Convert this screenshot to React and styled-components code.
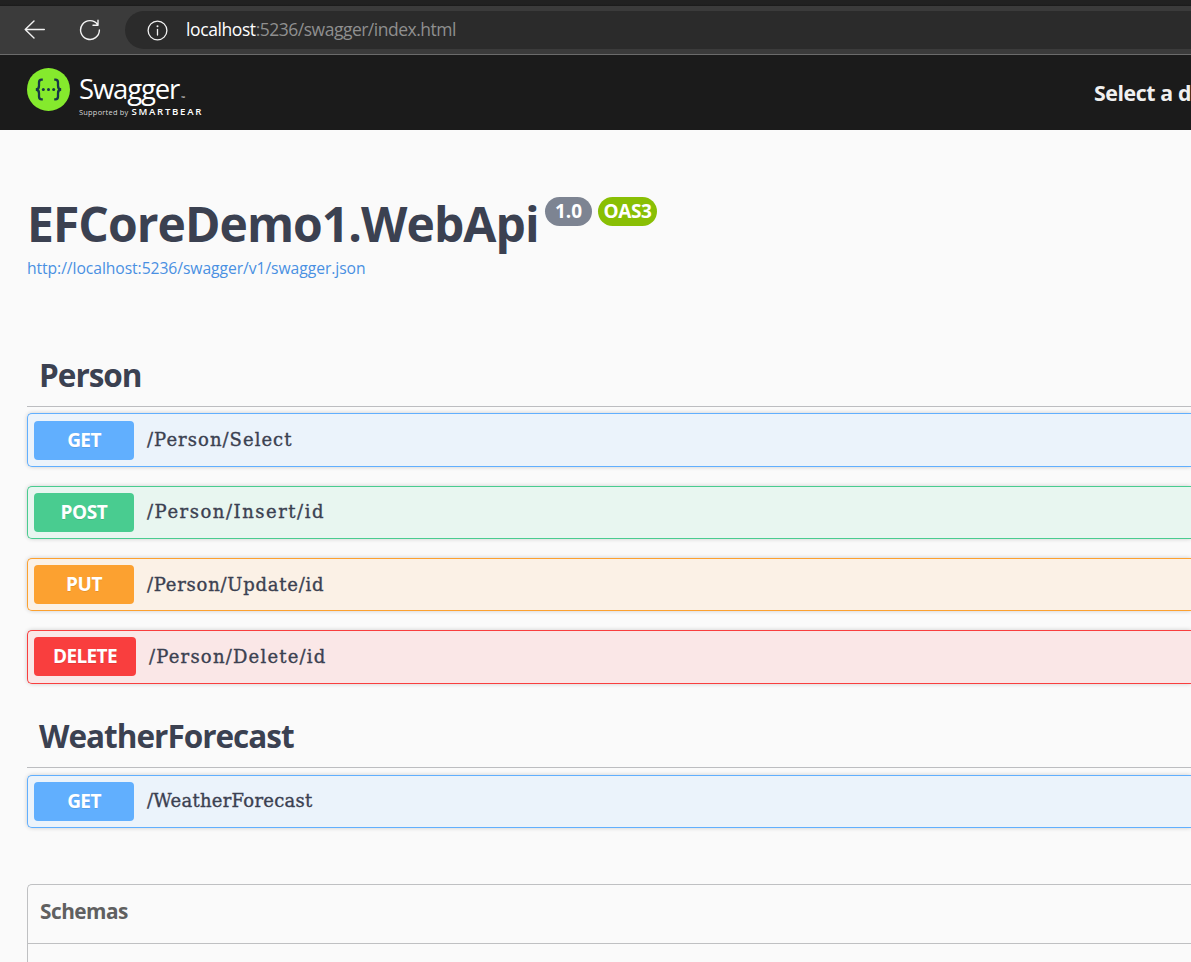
import React from "react";
import styled, { createGlobalStyle } from "styled-components";

const GlobalStyle = createGlobalStyle`
  * { box-sizing: border-box; }
  body {
    margin: 0;
    background: #fafafa;
    color: #3b4151;
    font-family: "Open Sans", "Noto Sans", sans-serif;
    overflow: hidden;
  }
`;

const Page = styled.div`
  height: 962px;
  overflow: hidden;
`;

const TabStrip = styled.div`
  height: 6px;
  background: linear-gradient(#212121 0 4px, #1a1a1a 6px);
`;

const BrowserBar = styled.div`
  height: 49px;
  display: flex;
  align-items: center;
  background: #3b3b3b;
  border-bottom: 1px solid #6b6b6b;
`;

const NavButton = styled.span`
  display: flex;
  width: 22px;
  height: 22px;
  margin-left: ${(p) => p.$left}px;
`;

const AddressBar = styled.div`
  flex: 1;
  height: 38px;
  margin-left: 24px;
  padding-left: 22px;
  display: flex;
  align-items: center;
  background: #2b2b2b;
  border-radius: 19px 0 0 19px;
`;

const Url = styled.span`
  margin: 0 0 2px 18px;
  font-size: 17.5px;
  line-height: 24px;
  letter-spacing: -0.5px;
  color: #8f8f8f;
  white-space: nowrap;
`;

const Host = styled.span`
  color: #fff;
  letter-spacing: -0.4px;
`;

const TopBar = styled.header`
  height: 75px;
  padding-left: 27px;
  display: flex;
  align-items: flex-start;
  justify-content: space-between;
  background: #1b1b1b;
`;

const Brand = styled.div`
  display: flex;
  padding-top: 13px;
`;

const Wordmark = styled.div`
  margin-left: 9px;
  padding-top: 3px;
  color: #fff;
`;

const BrandName = styled.div`
  display: flex;
  align-items: flex-end;
  font-size: 27.5px;
  line-height: 35px;
  font-weight: 400;
  letter-spacing: -1.15px;
`;

const Trademark = styled.span`
  margin-left: 2px;
  font-size: 5px;
  line-height: 15px;
  letter-spacing: 0;
`;

const Supported = styled.div`
  display: flex;
  font-size: 7.4px;
  line-height: 13px;
  white-space: nowrap;
  letter-spacing: 0.25px;
  color: #d8d8d8;
`;

const Company = styled.span`
  margin-left: 3px;
  font-size: 9.6px;
  line-height: 12px;
  font-weight: 600;
  letter-spacing: 1.7px;
  color: #fff;
`;

const SelectLabel = styled.span`
  padding-top: 22px;
  white-space: nowrap;
  font-size: 21.3px;
  line-height: 32px;
  font-weight: 700;
  letter-spacing: -0.4px;
  color: #f0f0f0;
`;

const Main = styled.main`
  padding-left: 27px;
`;

const Info = styled.section`
  height: 213px;
  padding-top: 62px;
`;

const TitleRow = styled.div`
  display: flex;
  height: 64px;
`;

const Title = styled.h1`
  margin: 0;
  width: 518px;
  font-size: 48px;
  line-height: 64px;
  font-weight: 700;
  letter-spacing: -0.96px;
  white-space: nowrap;
`;

const Badge = styled.span`
  width: ${(p) => p.$width}px;
  height: 29px;
  margin: 5px 6px 0 0;
  border-radius: 15px;
  background: ${(p) => p.$color};
  color: #fff;
  font-size: 19px;
  line-height: 29px;
  font-weight: 700;
  letter-spacing: ${(p) => p.$spacing};
  text-align: center;
`;

const SpecLink = styled.a`
  display: block;
  font-size: 15.7px;
  line-height: 24px;
  letter-spacing: -0.07px;
  color: #4990e2;
`;

const TagTitle = styled.h2`
  margin: 0;
  height: 64px;
  padding-left: 12px;
  border-bottom: 1px solid #bcbdc0;
  font-size: 31.5px;
  line-height: 63px;
  font-weight: 700;
  letter-spacing: -1px;
`;

const Operations = styled.div`
  display: flex;
  flex-direction: column;
  gap: 18.8px;
  padding-top: ${(p) => p.$top}px;
  height: ${(p) => p.$height}px;
`;

const Operation = styled.div`
  height: 53.45px;
  flex: none;
  display: flex;
  align-items: center;
  padding-left: 6px;
  border: 1px solid ${(p) => p.$color};
  border-right: 0;
  border-radius: 5px 0 0 5px;
  background: ${(p) => p.$tint};
  box-shadow: 0 0 4px rgba(0, 0, 0, 0.19);
`;

const Method = styled.span`
  width: ${(p) => p.$width}px;
  height: 39px;
  border-radius: 4px;
  background: ${(p) => p.$color};
  color: #fff;
  font-size: 19px;
  line-height: 39.6px;
  font-weight: 700;
  letter-spacing: ${(p) => p.$spacing};
  text-align: center;
  text-shadow: 0 1px 0 rgba(0, 0, 0, 0.1);
`;

const Path = styled.span`
  margin-left: 13px;
  font-family: "DejaVu Serif", serif;
  font-size: 18px;
  line-height: 26px;
  letter-spacing: ${(p) => p.$spacing};
  -webkit-text-stroke: 0.35px #3b4151;
`;

const Schemas = styled.section`
  height: 90px;
  border: 1px solid #bfc0c2;
  border-right: 0;
  border-bottom: 0;
  border-radius: 5px 0 0 0;
`;

const SchemasTitle = styled.h4`
  margin: 0;
  height: 59px;
  padding-left: 12px;
  border-bottom: 1px solid #bfc0c2;
  color: #606060;
  font-size: 20.8px;
  line-height: 52px;
  font-weight: 700;
  letter-spacing: -0.5px;
`;

const METHODS = {
  GET: { color: "#61affe", tint: "#ebf3fb", width: 100, spacing: "-0.6px" },
  POST: { color: "#49cc90", tint: "#e8f6f0", width: 100, spacing: "-0.4px" },
  PUT: { color: "#fca130", tint: "#fbf1e6", width: 100, spacing: "-0.4px" },
  DELETE: { color: "#f93e3e", tint: "#fae7e7", width: 102, spacing: "-0.6px" },
};

const PERSON = [
  { method: "GET", path: "/Person/Select", spacing: "1.03px" },
  { method: "POST", path: "/Person/Insert/id", spacing: "1.52px" },
  { method: "PUT", path: "/Person/Update/id", spacing: "0.75px" },
  { method: "DELETE", path: "/Person/Delete/id", spacing: "1.2px" },
];

const WEATHER = [{ method: "GET", path: "/WeatherForecast", spacing: "0.25px" }];

function OperationList({ items, height, top }) {
  return (
    <Operations $height={height} $top={top}>
      {items.map(({ method, path, spacing }) => {
        const m = METHODS[method];
        return (
          <Operation key={path} $color={m.color} $tint={m.tint}>
            <Method $color={m.color} $width={m.width} $spacing={m.spacing}>{method}</Method>
            <Path $spacing={spacing}>{path}</Path>
          </Operation>
        );
      })}
    </Operations>
  );
}

function BackIcon() {
  return (
    <svg width="22" height="22" fill="none" stroke="#f2f2f2" strokeWidth="1.4" strokeLinecap="round" strokeLinejoin="round">
      <path d="M20.3 10.5H1.2M10 2L1.2 10.5L10 19" />
    </svg>
  );
}

function ReloadIcon() {
  return (
    <svg width="22" height="22" fill="none" stroke="#f2f2f2" strokeWidth="1.4" strokeLinecap="round" strokeLinejoin="round">
      <path d="M20.4 11A9.4 9.4 0 1 1 18.6 5.5M19 1.3V6.2H14" />
    </svg>
  );
}

function InfoIcon() {
  return (
    <svg width="21" height="21" fill="none" stroke="#f2f2f2" strokeWidth="1.3" strokeLinecap="round">
      <circle cx="10.5" cy="10.5" r="9.4" />
      <path d="M10.5 9.5V15" />
      <circle cx="10.5" cy="6.3" r="1" fill="#f2f2f2" stroke="none" />
    </svg>
  );
}

function SwaggerMark() {
  return (
    <svg width="43" height="43" viewBox="0 0 43 43">
      <circle cx="21.5" cy="21.5" r="21.5" fill="#85ea2d" />
      <g fill="none" stroke="#173647" strokeWidth="2.3">
        <path d="M15.8 11.7H14.6Q12 11.7 12 14.5V17.8Q12 21.5 8.8 21.5Q12 21.5 12 25.2V28.5Q12 31.3 14.6 31.3H15.8" />
        <path d="M27.2 11.7H28.4Q31 11.7 31 14.5V17.8Q31 21.5 34.2 21.5Q31 21.5 31 25.2V28.5Q31 31.3 28.4 31.3H27.2" />
      </g>
      <g fill="#173647">
        <circle cx="16.3" cy="21.5" r="1.5" />
        <circle cx="21.5" cy="21.5" r="1.5" />
        <circle cx="26.7" cy="21.5" r="1.5" />
      </g>
    </svg>
  );
}

export default function App() {
  return (
    <Page>
      <GlobalStyle />
      <TabStrip />
      <BrowserBar>
        <NavButton $left={24}><BackIcon /></NavButton>
        <NavButton $left={33}><ReloadIcon /></NavButton>
        <AddressBar>
          <InfoIcon />
          <Url><Host>localhost</Host>:5236/swagger/index.html</Url>
        </AddressBar>
      </BrowserBar>
      <TopBar>
        <Brand>
          <SwaggerMark />
          <Wordmark>
            <BrandName>Swagger<Trademark>™</Trademark></BrandName>
            <Supported>Supported by<Company>SMARTBEAR</Company></Supported>
          </Wordmark>
        </Brand>
        <SelectLabel>Select a d</SelectLabel>
      </TopBar>
      <Main>
        <Info>
          <TitleRow>
            <Title>EFCoreDemo1.WebApi</Title>
            <Badge $width={47} $color="#7d8492" $spacing="0px">1.0</Badge>
            <Badge $width={59} $color="#89bf04" $spacing="-0.4px">OAS3</Badge>
          </TitleRow>
          <SpecLink>http://localhost:5236/swagger/v1/swagger.json</SpecLink>
        </Info>
        <TagTitle>Person</TagTitle>
        <OperationList items={PERSON} height={297} top={6.45} />
        <TagTitle>WeatherForecast</TagTitle>
        <OperationList items={WEATHER} height={116} top={6.6} />
        <Schemas>
          <SchemasTitle>Schemas</SchemasTitle>
        </Schemas>
      </Main>
    </Page>
  );
}
